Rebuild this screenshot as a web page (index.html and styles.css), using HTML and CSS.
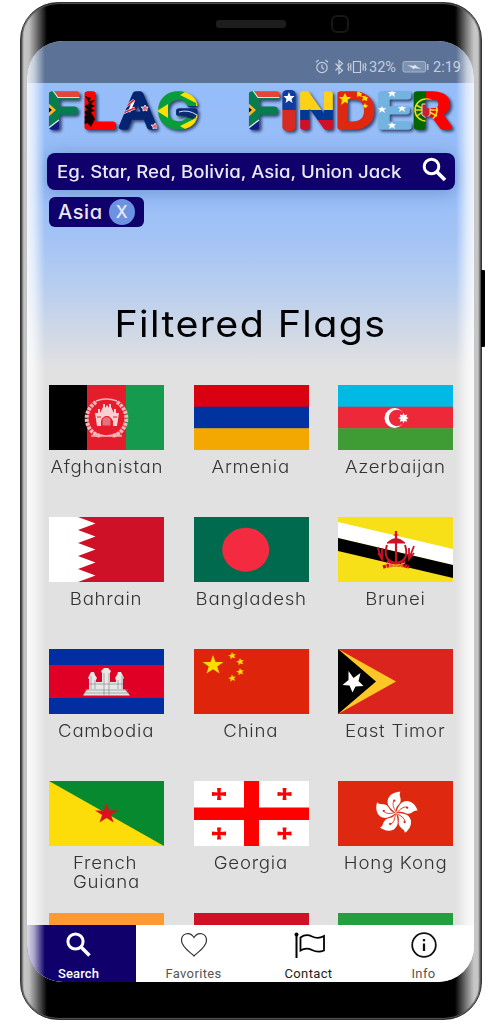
FILE: index.html
```html
<!DOCTYPE html>
<html lang="en">
<head>
<meta charset="utf-8">
<title>Flag Finder</title>
<link rel="stylesheet" href="styles.css">
</head>
<body>
<div class="phone">
  <div class="bezel"><span class="speaker"></span><span class="camera"></span></div>
  <span class="side-button"></span>
  <main class="screen">
    <div class="status">
      <svg width="52" height="16" viewBox="0 0 52 16" fill="none" stroke="currentColor" stroke-width="1.2">
        <circle cx="7" cy="8.500" r="5.200"/><path d="M7 5.500v3.200l2 1.600M1 3.200L3.600 1M13 3.200L10.400 1"/>
        <path d="M20.500 4.500l7 7-3.500 3V1.500l3.500 3-7 7"/>
        <path d="M38.500 2.500h7v11h-7zM35.800 4.500v7M48.200 4.500v7M34 4l-1 2 1 2-1 2 1 2M50 4l1 2-1 2 1 2-1 2"/>
      </svg>
      <span class="percent">32%</span>
      <svg width="27" height="14" viewBox="0 0 27 14"><rect x="1" y="1.500" width="22.500" height="10.500" rx="1.500" fill="#7d91b2" stroke="#a8b5cb"/><path d="M24.800 4h1.700v6h-1.700z" fill="#b5bfd1"/><path d="M5 5l7 1 .5-1.500 3 2.500 4 2-7-1-.5 1.500-3-2.500z" fill="#e2e7ef"/></svg>
      <span class="time">2:19</span>
    </div>
    <div class="content">
      <svg class="logo" width="447" height="70" viewBox="27 83 447 70" role="img" aria-label="Flag Finder">
        <defs>
          <pattern id="za" patternUnits="userSpaceOnUse" x="46" y="88" width="200" height="46">
            <rect width="200" height="46" fill="#087b50"/><path d="M5 0H60V9.500H12z" fill="#e54537"/><path d="M5 0L12 9.500H60" stroke="#dce8e5" stroke-width="1.200" fill="none"/>
            <path d="M0 13L10 22 0 31z" fill="#ffb81c"/><path d="M0 17L6 22 0 27z" fill="#111"/><path d="M3 41L13 32V46H0z" fill="#101d88"/><path d="M1 41L13 32" stroke="#e4eeee" stroke-width="1.200"/>
          </pattern>
          <pattern id="al" patternUnits="userSpaceOnUse" x="80" y="88" width="40" height="46"><rect width="40" height="46" fill="#f00"/><path d="M5 8l6 2-2 3 6-1-4 4 4 2-4 2 4 3-4 1 4 7-4 8-4-4-4 2 2-6-2-2 3-2-2-3 3-2-2-4 4-3z" fill="#130303"/></pattern>
          <pattern id="nz" patternUnits="userSpaceOnUse" x="116" y="88" width="45" height="46"><rect width="45" height="46" fill="#06246f"/><path d="M8 20l10-8M7 25l12-5M13 24l5-12" stroke="#fff" stroke-width="2.500"/><path d="M8 20l10-8M7 25l12-5" stroke="#d42440" stroke-width="1.700"/><path d="M29 17l1 2h2l-1 2v2l-2-1-2 1v-2l-2-2h3zM39 35l1 2h2l-1 2v2l-2-1-2 1v-2l-2-2h3z" fill="#f15a6c" stroke="#fff" stroke-width=".7"/></pattern>
          <pattern id="br" patternUnits="userSpaceOnUse" x="156" y="88" width="45" height="46"><rect width="45" height="46" fill="#099c3b"/><path d="M24 7L34 1 44 9V36L34 44 24 38 34 33 40 30V15z" fill="#fedf00"/><path d="M20 18h22v8l-5 5-17-4z" fill="#082b72"/><path d="M1 23l11-7v14z" fill="#fedf00"/><path d="M23 24q9-3 18 3" stroke="#d7e3ed" fill="none"/></pattern>
          <pattern id="cl" patternUnits="userSpaceOnUse" x="281" y="88" width="18" height="46"><rect width="18" height="46" fill="#103d9d"/><path d="M0 22h18v24H0z" fill="#d72b22"/><path d="M8 4l1.500 4h4l-3 3 1 4-3.500-2.500L4.500 15l1-4-3-3h4z" fill="#fff"/></pattern>
          <pattern id="co" patternUnits="userSpaceOnUse" x="297" y="88" width="41" height="46"><rect width="41" height="46" fill="#fcd116"/><path d="M0 22h41v24H0z" fill="#003893"/><path d="M0 32h41v14H0z" fill="#ce1126"/></pattern>
          <pattern id="cn" patternUnits="userSpaceOnUse" x="335" y="88" width="42" height="46"><rect width="42" height="46" fill="#de2910"/><path d="M10 5l2 4h4l-3 3 1 4-4-2-4 3 1-5-3-3h4zM24 3l1 2h2l-1 2 1 2-3-1-2 1v-5zM30 7l1 2h2l-1 2v2l-3-1-2 1 1-3-1-2h3zM30 15l1 2h2l-2 3-3-1-1-2h2z" fill="#ffde00"/></pattern>
          <pattern id="fm" patternUnits="userSpaceOnUse" x="376" y="88" width="38" height="46"><rect width="38" height="46" fill="#73b3df"/><path id="mini" d="M16 2l1 2h3l-2 2 1 3-3-2-3 2 1-3-2-2h3z" fill="#fff"/><use href="#mini" x="-10" y="16"/><use href="#mini" x="10" y="15"/><use href="#mini" y="32"/></pattern>
          <pattern id="pt" patternUnits="userSpaceOnUse" x="412" y="88" width="42" height="46"><rect width="42" height="46" fill="#f00"/><path d="M0 0h14v46H0z" fill="#060"/><g fill="none" stroke="#f3df18" stroke-width="1.500"><circle cx="14" cy="22" r="11"/><path d="M4 17l21 11M5 28l18-13M3 22h23"/></g><path d="M10 16h8v11l-4 3-4-3z" fill="#d01c2d" stroke="#ddd"/></pattern>
        </defs>
        <g class="logo-text">
          <text x="47" y="126.500" textLength="33" lengthAdjust="spacingAndGlyphs" fill="url(#za)" stroke="url(#za)">F</text>
          <text x="82.500" y="126.500" textLength="33" lengthAdjust="spacingAndGlyphs" fill="url(#al)" stroke="url(#al)">L</text>
          <text x="120.500" y="126.500" textLength="35" lengthAdjust="spacingAndGlyphs" fill="url(#nz)" stroke="url(#nz)">A</text>
          <text x="158" y="126.500" textLength="40" lengthAdjust="spacingAndGlyphs" fill="url(#br)" stroke="url(#br)">G</text>
          <g transform="translate(200)"><text x="47" y="126.500" textLength="33" lengthAdjust="spacingAndGlyphs" fill="url(#za)" stroke="url(#za)">F</text></g>
          <text class="letter-i" x="282" y="126.500" textLength="14" lengthAdjust="spacingAndGlyphs" fill="url(#cl)" stroke="url(#cl)">I</text>
          <text x="298.500" y="126.500" textLength="36" lengthAdjust="spacingAndGlyphs" fill="url(#co)" stroke="url(#co)">N</text>
          <text x="335.500" y="126.500" textLength="39" lengthAdjust="spacingAndGlyphs" fill="url(#cn)" stroke="url(#cn)">D</text>
          <text x="376" y="126.500" textLength="36" lengthAdjust="spacingAndGlyphs" fill="url(#fm)" stroke="url(#fm)">E</text>
          <text x="411.500" y="126.500" textLength="39" lengthAdjust="spacingAndGlyphs" fill="url(#pt)" stroke="url(#pt)">R</text>
        </g>
      </svg>
      <div class="search"><span class="hint">Eg. Star, Red, Bolivia, Asia, Union Jack</span>
        <svg width="26" height="26" viewBox="0 0 26 26" fill="none" stroke="#fff"><circle cx="9.500" cy="9.500" r="7.300" stroke-width="3"/><path d="M15 15l8 8" stroke-width="3.800"/></svg></div>
      <div class="chip"><span>Asia</span><span class="remove">X</span></div>
      <h1>Filtered Flags</h1>
      <section class="flags">
        <figure><svg class="flag" viewBox="0 0 115 65"><path d="M0 0h38v65H0z" fill="#000"/><path d="M38 0h39v65H38z" fill="#e51c2c"/><path d="M77 0h38v65H77z" fill="#169b4e"/><g fill="none" stroke="#f6b5b9"><path d="M47 17q-11 8-9 20 3 12 14 14M68 17q11 8 9 20-3 12-14 14" stroke-width="4" stroke-dasharray="3 1"/><path d="M47 16q10-4 21 0M42 51h31M44 48q13 6 27 0" stroke-width="1.500"/></g><path d="M46 28h3v-4h2v4l3-6v-3h2v4l2-3 2 3v-4h2v3l3 6v-4h2v4h3l-2 13h-4v-5q-6-10-12 0v5h-4z" fill="#f9d1d2"/><path d="M53 41v-7q5-5 9 0v7zM48 32h4M64 32h4" fill="#e8707b" stroke="#e51c2c"/></svg><figcaption>Afghanistan</figcaption></figure>
        <figure><svg class="flag" viewBox="0 0 115 65"><path d="M0 0h115v22H0z" fill="#d90012"/><path d="M0 21.700h115v22H0z" fill="#0033a0"/><path d="M0 43.300h115V65H0z" fill="#f2a800"/></svg><figcaption>Armenia</figcaption></figure>
        <figure><svg class="flag" viewBox="0 0 115 65"><path d="M0 0h115v22H0z" fill="#00b9e4"/><path d="M0 21.700h115v22H0z" fill="#ed2939"/><path d="M0 43.300h115V65H0z" fill="#3f9c35"/><circle cx="56.500" cy="33" r="10" fill="#fff"/><circle cx="59" cy="33" r="8.200" fill="#ed2939"/><path d="M65.500 28l1.200 2.300 2.500-.8-.8 2.500 2.300 1-2.300 1.200.8 2.500-2.500-.8-1.200 2.300-1.200-2.300-2.500.8.8-2.500-2.300-1.200 2.300-1-.8-2.500 2.500.8z" fill="#fff"/></svg><figcaption>Azerbaijan</figcaption></figure>
        <figure><svg class="flag" viewBox="0 0 115 65"><path d="M0 0h115v65H0z" fill="#ce1126"/><path d="M0 0h29l17.500 6.500L29 13l17.500 6.500L29 26l17.500 6.500L29 39l17.500 6.500L29 52l17.500 6.500L29 65H0z" fill="#fff"/></svg><figcaption>Bahrain</figcaption></figure>
        <figure><svg class="flag" viewBox="0 0 115 65"><path d="M0 0h115v65H0z" fill="#006a4e"/><ellipse cx="51.700" cy="32.700" rx="23.500" ry="22" fill="#f42a41"/></svg><figcaption>Bangladesh</figcaption></figure>
        <figure><svg class="flag" viewBox="0 0 115 65"><path d="M0 0h115v65H0z" fill="#f7e017"/><path d="M0 5l115 27v16L0 21z" fill="#fff"/><path d="M0 21l115 27v13L0 34z" fill="#000"/><g fill="none" stroke="#cf1126"><path d="M58 14v34" stroke-width="2.200"/><path d="M55.500 18h5M49 26q9-9 18 0z" fill="#cf1126"/><path d="M49 28q-5 16 9 18 14-2 9-18" stroke-width="2"/><path d="M39.500 30l4 12M40 36l4 6v-11M76 29l-5 13M76 36l-5 6v-11" stroke-width="1.800"/><path d="M49 44q9 6 18 0M45 50q13-4 26 0" stroke-width="3.500" stroke-dasharray="3 .6"/></g><path d="M49 46q9 4 18 0M51 49h14" fill="none" stroke="#f2b91b"/></svg><figcaption>Brunei</figcaption></figure>
        <figure><svg class="flag" viewBox="0 0 115 65"><path d="M0 0h115v65H0z" fill="#032ea1"/><path d="M0 16h115v33H0z" fill="#e00025"/><path d="M34 46.500l4-6h2V30l-1-1 2-4 1-2h3l1 3 2 3-1 2v2h6v-9l-1-2 3-3h4l3 3-1 2v9h6v-2l-1-2 2-3 1-3h3l1 2 2 4-1 1v10.500h2l5 6z" fill="#e7e7e7"/><path d="M36 41h43M40 35h34M42 27v13M46 31v9M55 24v22M60 24v22M69 31v9M73 27v13M35 44h45" fill="none" stroke="#898d91" stroke-width=".7"/></svg><figcaption>Cambodia</figcaption></figure>
        <figure><svg class="flag" viewBox="0 0 115 65"><path d="M0 0h115v65H0z" fill="#de250b"/><path d="M19 6l2.500 7h8l-6.300 4.500 2.300 7-6.500-4.300-6.500 4.300 2.300-7L8.500 13h8z" fill="#ffde00"/><g fill="#ffde00"><path id="tiny" d="M38 3l1 2.200 2.700-.2-1.700 2 1.300 2.200-2.800-.7-2 1.800.1-2.600-2.500-1.200 2.800-.8z"/><use href="#tiny" x="8" y="6"/><use href="#tiny" x="8" y="16"/><use href="#tiny" y="22.500"/></g></svg><figcaption>China</figcaption></figure>
        <figure><svg class="flag" viewBox="0 0 115 65"><path d="M0 0h115v65H0z" fill="#dc241f"/><path d="M0 0l58 32.500L0 65z" fill="#ffc726"/><path d="M0 0l38 32.500L0 65z" fill="#000"/><path d="M10.500 22l5 7 7-5-2 8 5 5-8 .5-3 6-3-7-7-.5 6-5z" fill="#fff"/></svg><figcaption>East Timor</figcaption></figure>
        <figure><svg class="flag" viewBox="0 0 115 65"><path d="M0 0h115v65H0z" fill="#fcdd09"/><path d="M0 0h115v65z" fill="#078930"/><path d="M57.500 22l2.700 7.500h8.800L62 34l2.600 7.500-7.100-4.500-7 4.500L53 34l-7-4.500h8.800z" fill="#da121a"/></svg><figcaption class="narrow">French Guiana</figcaption></figure>
        <figure><svg class="flag" viewBox="0 0 115 65"><path d="M0 0h115v65H0z" fill="#fff"/><path d="M0 26.500h50V0h15v26.500h50v12.500H65v26H50V39H0z" fill="#f00"/><path id="cross" d="M23 7h4l-.5 4.500 5.500-.5v4l-5.500-.5.500 4.500h-4l.5-4.500L18 15v-4l5.500.5z" fill="#f00"/><use href="#cross" x="65.500"/><use href="#cross" y="39.500"/><use href="#cross" x="65.500" y="39.500"/></svg><figcaption>Georgia</figcaption></figure>
        <figure><svg class="flag" viewBox="0 0 115 65"><path d="M0 0h115v65H0z" fill="#de2910"/><g transform="translate(58 32) scale(1.12) translate(-58 -32)"><g id="petal"><path d="M58 32c-5-4-9-7-7-13 2-4 6-6 11-6-2 3 1 5 0 9-1 3-5 4-4 10z" fill="#fff"/><path d="M58 31q-4-6-2-10" fill="none" stroke="#de2910" stroke-width=".7"/><circle cx="56.500" cy="21" r="1" fill="#de2910"/></g><use href="#petal" transform="rotate(72 58 32)"/><use href="#petal" transform="rotate(144 58 32)"/><use href="#petal" transform="rotate(216 58 32)"/><use href="#petal" transform="rotate(288 58 32)"/></g></svg><figcaption>Hong Kong</figcaption></figure>
        <figure><svg class="flag" viewBox="0 0 115 65"><path d="M0 0h115v65H0z" fill="#ff9933"/></svg></figure>
        <figure><svg class="flag" viewBox="0 0 115 65"><path d="M0 0h115v65H0z" fill="#ce1126"/></svg></figure>
        <figure><svg class="flag" viewBox="0 0 115 65"><path d="M0 0h115v65H0z" fill="#239f40"/></svg></figure>
      </section>
    </div>
    <nav>
      <a class="active"><svg width="32" height="28" viewBox="0 0 32 28" fill="none" stroke="#fff"><circle cx="12.500" cy="10.500" r="7.600" stroke-width="3"/><path d="M18 16l8.500 8.500" stroke-width="3.600"/></svg><span>Search</span></a>
      <a><svg width="32" height="28" viewBox="0 0 32 28" fill="none" stroke="#333" stroke-width="1.200"><path d="M16 25C12 21 3.500 16 3.500 9.500 3.500 2 12 0 16 6.500 20 0 28.500 2 28.500 9.500 28.500 16 20 21 16 25z"/></svg><span>Favorites</span></a>
      <a class="contact"><svg width="32" height="28" viewBox="0 0 32 28" fill="none" stroke="#000"><circle cx="3.500" cy="3.500" r="2" fill="#000" stroke="none"/><path d="M3.500 4v23" stroke-width="2"/><path d="M7.500 6.500Q13 2.500 19 5.500T31 5v14.500Q25 22 19 19T7.500 19.500z" stroke-width="1.800"/></svg><span>Contact</span></a>
      <a><svg width="32" height="28" viewBox="0 0 32 28" fill="none" stroke="#111" stroke-width="1.800"><circle cx="16" cy="14" r="11.800"/><path d="M16 12.500v7.500M16 8v2.300" stroke-width="2.300"/></svg><span>Info</span></a>
    </nav>
  </main>
</div>
</body>
</html>
```
FILE: styles.css
```css
* { box-sizing: border-box; }
body { margin: 0; padding: 2px 0 0 20px; width: 500px; height: 1024px; overflow: hidden; background: #fff; font-family: Inter, "Noto Sans", sans-serif; }
.phone { position: relative; width: 462px; height: 1018px; padding: 0 7px; border: 1px solid #333; border-radius: 38px; box-shadow: inset 0 0 1px 1px #555; background: linear-gradient(90deg, #222 0, #777 1px, #c6c6c6 3px, #bfbfbf 8px, #777 15px, #000 26px, #000 434px, #777 445px, #c6c6c6 453px, #c6c6c6 457px, #777 459px, #222 461px); }
.bezel { height: 38px; display: flex; align-items: center; padding: 4px 0 0 188px; }
.speaker { width: 70px; height: 8px; border-radius: 3px; background: #1d1d1d; }
.camera { width: 18px; height: 18px; margin-left: 45px; border: 2px solid #181818; border-radius: 6px; }
.side-button { position: absolute; left: 460px; top: 267px; width: 4px; height: 77px; background: #000; border-radius: 0 1px 1px 0; }
.screen { position: relative; width: 447px; height: 941px; margin-left: -1px; border-radius: 36px; overflow: hidden; background: #e1e1e1; }
.screen::after { content: ""; position: absolute; inset: 0; pointer-events: none; background: linear-gradient(90deg, rgba(255,255,255,.85) 0, rgba(255,255,255,.65) 7px, transparent 18px, transparent 429px, rgba(255,255,255,.65) 440px, rgba(255,255,255,.85) 447px); }
.status { height: 42px; padding: 10px 13px 0 0; display: flex; align-items: center; justify-content: flex-end; color: #c5cede; background: #5c7397; font: 14.500px Roboto, sans-serif; }
.percent { width: 29px; margin: 0 4px 0 2px; }
.time { margin-left: 4px; }
.content { height: 842px; overflow: hidden; background: linear-gradient(#95bdf9 0, #98bef8 110px, #a3c3f5 155px, #b5cdf0 200px, #d0d8e6 249px, #e1e1e1 286px); }
.logo { display: block; }
.logo-text { font: 300 45px Inter, sans-serif; stroke-width: 5.500px; stroke-linejoin: round; filter: drop-shadow(2px 2px 1.500px rgba(20,30,70,.75)); }
.letter-i { stroke-width: 8px; }
.search { display: flex; align-items: center; justify-content: space-between; width: 408px; height: 37px; margin-left: 20px; padding: 0 7px 0 10px; border-radius: 8px; background: #0f006b; color: #e9e8f4; font-size: 17px; font-weight: 500; white-space: nowrap; box-shadow: 0 2px 18px rgba(40,70,130,.35); font-feature-settings: "cv11"; }
.hint { transform: scaleX(1.095); transform-origin: left; }
.search svg { margin: -3px 0 0 0; }
.chip { display: flex; align-items: center; gap: 6px; width: 95px; height: 30px; margin: 7px 0 0 22px; padding-left: 9px; border-radius: 6px; background: #0f006b; color: #e9e8f4; font-size: 20px; font-weight: 500; letter-spacing: .6px; font-feature-settings: "cv11"; }
.remove { width: 26px; height: 26px; border-radius: 50%; background: #6c92e2; font-size: 17px; line-height: 26px; text-align: center; letter-spacing: 0; }
h1 { margin: 77px 0 41px; font-size: 37px; line-height: 40px; font-weight: 400; text-align: center; letter-spacing: 1.300px; transform: scaleX(1.065); font-feature-settings: "cv11"; }
.flags { display: grid; grid-template-columns: repeat(3, 115px); grid-auto-rows: 132px; column-gap: 29.500px; margin-left: 22px; }
figure { margin: 0; display: flex; flex-direction: column; align-items: center; }
.flag { display: block; width: 115px; height: 65px; flex: none; }
figcaption { margin-top: 7px; font-size: 17.500px; line-height: 19px; font-weight: 300; color: #333; letter-spacing: .7px; white-space: nowrap; transform: scaleX(1.065); font-feature-settings: "cv11"; }
.narrow { width: 63px; white-space: normal; }
nav { display: grid; grid-template-columns: repeat(4, 115px); height: 57px; margin-left: -6px; width: 460px; background: #fff; }
nav a { display: flex; flex-direction: column; align-items: center; padding-top: 6px; color: #555; font: 13px Roboto, sans-serif; letter-spacing: .35px; }
nav svg { flex: none; }
nav span { margin-top: 7px; line-height: 16px; }
nav .active { background: #0f006b; color: #fff; font-weight: 500; letter-spacing: .1px; }
nav .contact { color: #222; }
```
